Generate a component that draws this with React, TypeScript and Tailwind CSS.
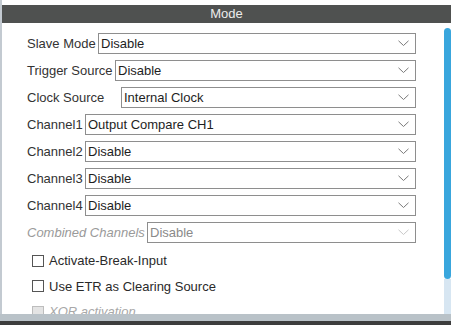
import React from "react";

const Chevron = ({ light }: { light?: boolean }) => (
  <svg width="11" height="7" viewBox="0 0 11 7" className="shrink-0">
    <polyline points="0.5,0.8 5.5,5.5 10.5,0.8" fill="none" stroke={light ? "#c8c8c8" : "#7a7a7a"} strokeWidth="1" />
  </svg>
);

const Select = ({ value, disabled }: { value: string; disabled?: boolean }) => (
  <div className="flex-1 h-[21px] border border-[#8e8e8e] bg-white flex items-center pl-[2px] pr-[6px]">
    <span className={"flex-1 leading-none " + (disabled ? "text-[#8a8a8a]" : "text-[#1e1e1e]")}>{value}</span>
    <Chevron light={disabled} />
  </div>
);

const Row = ({ label, w, value, disabled }: { label: string; w: string; value: string; disabled?: boolean }) => (
  <div className="flex items-center h-[21px]">
    <span className={w + " shrink-0 whitespace-nowrap " + (disabled ? "italic text-[#9a9a9a]" : "text-[#333333]")}>{label}</span>
    <Select value={value} disabled={disabled} />
  </div>
);

const Check = ({ label, disabled, first }: { label: string; disabled?: boolean; first?: boolean }) => (
  <div className={"flex items-center h-[21px] pl-[5px] gap-[5px] " + (first ? "mt-[2px]" : "")}>
    <div className={"w-[12px] h-[12px] border " + (disabled ? "border-[#bdbdbd] bg-[#e4e4e4]" : "border-[#555555] bg-white")} />
    <span className={disabled ? "italic text-[#a8a8a8]" : "text-[#2a2a2a]"}>{label}</span>
  </div>
);

export default function App() {
  return (
    <div className="w-[451px] h-[325px] flex flex-col bg-white overflow-hidden text-[13px]" style={{ fontFamily: '"Liberation Sans", Arial, sans-serif' }}>
      <div className="flex flex-1 min-h-0">
        <div className="w-[2px] bg-[#c3cad1]" />
        <div className="flex-1 flex flex-col min-w-0">
          <div className="h-[5px] bg-white" />
          <div className="h-[18px] bg-[#4f5150] text-[#ececec] flex items-center justify-center">Mode</div>
          <div className="flex-1 flex min-h-0">
            <div className="flex-1 flex flex-col gap-[6px] pt-[10px] pl-[25px] pr-[28px] overflow-hidden">
              <Row label="Slave Mode" w="w-[71px]" value="Disable" />
              <Row label="Trigger Source" w="w-[88px]" value="Disable" />
              <Row label="Clock Source" w="w-[94px]" value=" Internal Clock" />
              <Row label="Channel1" w="w-[58px]" value="Output Compare CH1" />
              <Row label="Channel2" w="w-[58px]" value="Disable" />
              <Row label="Channel3" w="w-[58px]" value="Disable" />
              <Row label="Channel4" w="w-[58px]" value="Disable" />
              <Row label="Combined Channels" w="w-[120px]" value="Disable" disabled />
              <Check label="Activate-Break-Input" first />
              <Check label="Use ETR as Clearing Source" />
              <Check label="XOR activation" disabled />
            </div>
            <div className="w-[7px] flex flex-col">
              <div className="h-[5px] bg-white" />
              <div className="h-[251px] bg-[#39a6dd] rounded-t-[4px] rounded-b-[4px]" />
              <div className="flex-1 bg-[#d7e6f2]" />
            </div>
          </div>
        </div>
      </div>
      <div className="h-[7px] bg-[#b9c2c8]" />
      <div className="h-[4px] bg-[#3d3d3d]" />
    </div>
  );
}
